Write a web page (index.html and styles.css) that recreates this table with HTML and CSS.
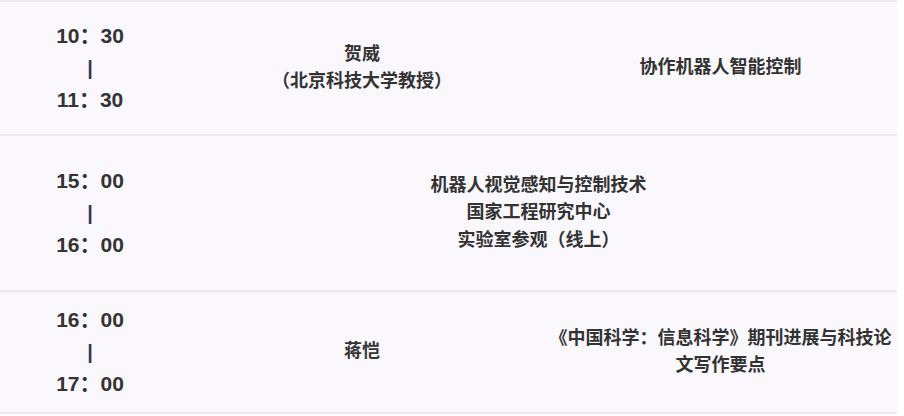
FILE: index.html
```html
<!DOCTYPE html>
<html lang="zh-CN">
<head>
<meta charset="utf-8">
<title>日程</title>
<link rel="stylesheet" href="styles.css">
</head>
<body>
<table class="schedule">
  <colgroup>
    <col class="col-time">
    <col class="col-speaker">
    <col class="col-topic">
  </colgroup>
  <tbody>
    <tr class="row-a">
      <td class="time">10：30<br><span class="sep">|</span><br>11：30</td>
      <td class="text">贺威<br>（北京科技大学教授）</td>
      <td class="text">协作机器人智能控制</td>
    </tr>
    <tr class="row-b">
      <td class="time">15：00<br><span class="sep">|</span><br>16：00</td>
      <td class="text" colspan="2">机器人视觉感知与控制技术<br>国家工程研究中心<br>实验室参观（线上）</td>
    </tr>
    <tr class="row-c">
      <td class="time">16：00<br><span class="sep">|</span><br>17：00</td>
      <td class="text">蒋恺</td>
      <td class="text">《中国科学：信息科学》期刊进展与科技论文写作要点</td>
    </tr>
  </tbody>
</table>
</body>
</html>
```

FILE: styles.css
```css
html, body {
  margin: 0;
  padding: 0;
  background: #ffffff;
}

.schedule {
  width: 897px;
  border-collapse: collapse;
  table-layout: fixed;
  background: #faf8fc;
  font-family: "Liberation Sans", "Noto Sans CJK SC", sans-serif;
  font-weight: bold;
  font-size: 18px;
  color: #333333;
}

.col-time { width: 180px; }
.col-speaker { width: 364px; }
.col-topic { width: 353px; }

.schedule td {
  border-top: 2px solid #ebe9f0;
  border-bottom: 2px solid #ebe9f0;
  padding: 0 4px;
  text-align: center;
  vertical-align: middle;
}

.row-a td { height: 132px; }
.row-b td { height: 154px; }
.row-c td { height: 120px; }

.time {
  font-size: 21px;
  line-height: 32px;
}

.sep {
  font-size: 20px;
  font-weight: bold;
  color: #3a3550;
}

.text {
  line-height: 27.5px;
}
```
